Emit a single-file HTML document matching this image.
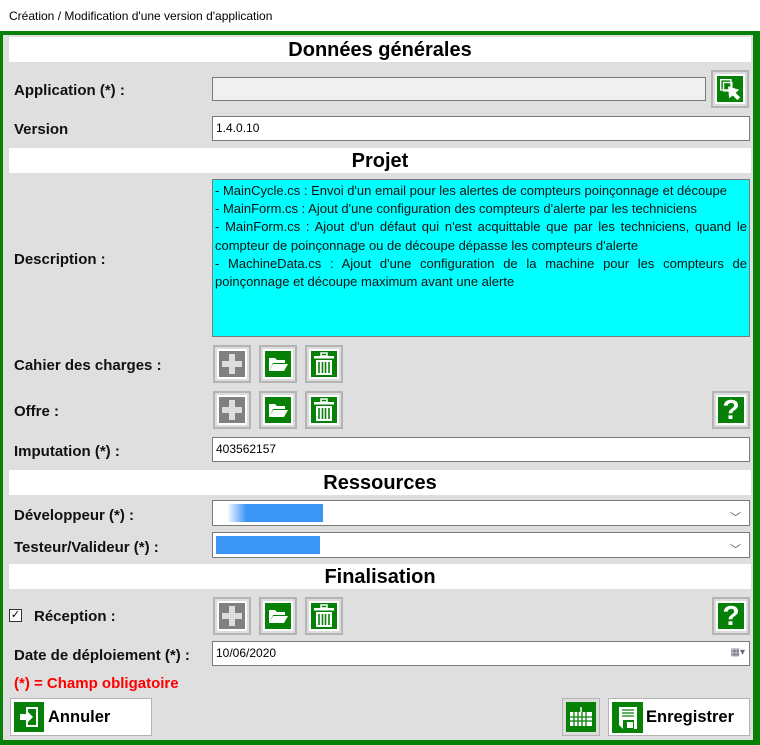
<!DOCTYPE html>
<html><head><meta charset="utf-8"><style>
*{margin:0;padding:0;box-sizing:border-box}
body{width:760px;height:745px;background:#fff;font-family:"Liberation Sans",Arial,sans-serif;position:relative;overflow:hidden}
.a{position:absolute}
.title{left:9px;top:9px;font-size:12px;color:#000}
.frame{left:0;top:31px;width:760px;height:714px;background:#078007}
.inner{left:3px;top:35px;width:750px;height:705px;background:#dfdfdf}
.hdr{left:9px;width:742px;height:25px;background:#fff;font-size:20px;font-weight:bold;text-align:center;line-height:26px}
.lbl{font-size:15px;font-weight:bold;color:#111}
.inp{background:#fff;border:1px solid #7a7a7a;font-size:12px;padding-left:3px;line-height:22px}
.btn{width:38px;height:38px;border:2px solid #b4b4b4;background:#dcdcdc;padding:2px}
.btn .in{width:100%;height:100%;background:#078007;border:2px solid #fff;display:flex;align-items:center;justify-content:center}
.btn.g .in{background:#808080}
.chev{right:8px;top:6px;font-size:11px;color:#555}
.qm{color:#fff;font-size:28px;font-weight:bold;line-height:28px}
</style></head><body>
<div class="a title">Création / Modification d'une version d'application</div>
<div class="a frame"></div>
<div class="a inner"></div>

<div class="a hdr" style="top:37px">Données générales</div>
<div class="a lbl" style="left:14px;top:82px">Application (*) :</div>
<div class="a inp" style="left:212px;top:77px;width:494px;height:24px;background:#f0f0f0"></div>
<div class="a btn" style="left:711px;top:70px"><div class="in"><svg width="28" height="28" viewBox="0 0 28 28"><rect x="4" y="4" width="11" height="11" fill="none" stroke="#fff" stroke-width="1.5"/><rect x="7" y="7" width="9" height="9" fill="none" stroke="#fff" stroke-width="1.5"/><path d="M12 11 L24 15 L20 18 L25 23 L22 26 L17 21 L13 24 Z" fill="#fff"/></svg></div></div>
<div class="a lbl" style="left:14px;top:121px">Version</div>
<div class="a inp" style="left:212px;top:116px;width:538px;height:25px">1.4.0.10</div>

<div class="a hdr" style="top:148px">Projet</div>
<div class="a lbl" style="left:14px;top:251px">Description :</div>
<div class="a" style="left:212px;top:179px;width:538px;height:158px;background:#00ffff;border:1px solid #7a7a7a;font-size:13px;line-height:18.2px;padding:2px 2px 0 2px;text-align:justify;color:#111">- MainCycle.cs : Envoi d'un email pour les alertes de compteurs poinçonnage et découpe<br>- MainForm.cs : Ajout d'une configuration des compteurs d'alerte par les techniciens<br>- MainForm.cs : Ajout d'un défaut qui n'est acquittable que par les techniciens, quand le compteur de poinçonnage ou de découpe dépasse les compteurs d'alerte<br>- MachineData.cs : Ajout d'une configuration de la machine pour les compteurs de poinçonnage et découpe maximum avant une alerte</div>

<div class="a lbl" style="left:14px;top:357px">Cahier des charges :</div>
<div class="a lbl" style="left:14px;top:403px">Offre :</div>
<div class="a lbl" style="left:14px;top:443px">Imputation (*) :</div>
<div class="a inp" style="left:212px;top:437px;width:538px;height:25px">403562157</div>

<div class="a hdr" style="top:470px">Ressources</div>
<div class="a lbl" style="left:14px;top:507px">Développeur (*) :</div>
<div class="a inp" style="left:212px;top:500px;width:538px;height:26px"><div class="a" style="left:14px;top:3px;width:96px;height:18px;background:linear-gradient(90deg,#fff,#3b95f5 20%,#3b95f5)"></div><div class="a chev">﹀</div></div>
<div class="a lbl" style="left:14px;top:539px">Testeur/Valideur (*) :</div>
<div class="a inp" style="left:212px;top:532px;width:538px;height:26px"><div class="a" style="left:3px;top:3px;width:104px;height:18px;background:#3b95f5"></div><div class="a chev">﹀</div></div>

<div class="a hdr" style="top:564px">Finalisation</div>
<div class="a" style="left:9px;top:609px;width:13px;height:13px;border:1px solid #333;background:#fff;font-size:11px;line-height:11px;text-align:center">✓</div>
<div class="a lbl" style="left:34px;top:608px">Réception :</div>
<div class="a lbl" style="left:14px;top:647px">Date de déploiement (*) :</div>
<div class="a inp" style="left:212px;top:641px;width:538px;height:25px">10/06/2020<span class="a" style="right:4px;top:0;color:#667;font-size:10px">▦▾</span></div>
<div class="a" style="left:14px;top:675px;font-size:15px;font-weight:bold;color:#f00">(*) = Champ obligatoire</div>

<div id="rows"></div>
<script>
const plus='<svg width="24" height="24"><path d="M9 2h6v7h7v6h-7v7h-6v-7h-7v-6h7z" fill="#ddd"/></svg>';
const fold='<svg width="22" height="18"><path d="M2 3h6l2 2h8v3H6L2 16z" fill="#fff"/><path d="M6 9h15l-4 7H2z" fill="#fff"/></svg>';
const trash='<svg width="22" height="24"><rect x="8" y="1" width="6" height="3" fill="none" stroke="#fff" stroke-width="1.5"/><rect x="1" y="4" width="20" height="2.5" fill="#fff"/><path d="M3 8h16v15H3z" fill="#fff"/><path d="M6 10v11M9.5 10v11M12.5 10v11M16 10v11" stroke="#078007" stroke-width="1.6"/></svg>';
const q='<span class="qm">?</span>';
let h='';
[345,391,597].forEach(t=>{
 h+=`<div class="a btn g" style="left:213px;top:${t}px"><div class="in">${plus}</div></div>`;
 h+=`<div class="a btn" style="left:259px;top:${t}px"><div class="in">${fold}</div></div>`;
 h+=`<div class="a btn" style="left:305px;top:${t}px"><div class="in">${trash}</div></div>`;
});
[391,597].forEach(t=>{h+=`<div class="a btn" style="left:712px;top:${t}px"><div class="in">${q}</div></div>`;});
document.getElementById('rows').outerHTML=h;
</script>

<div class="a" style="left:10px;top:698px;width:142px;height:38px;border:1px solid #b4b4b4;background:#fff;padding:2px">
 <div class="a" style="left:3px;top:3px;width:30px;height:30px;background:#078007;display:flex;align-items:center;justify-content:center"><svg width="22" height="24"><path d="M8 2h12v20H8v-5h2v3h8V4h-8v3H8z" fill="#fff"/><path d="M2 9h6V5l7 7-7 7v-4H2z" fill="#fff"/></svg></div>
 <div class="a" style="left:37px;top:9px;font-size:16.5px;font-weight:bold">Annuler</div>
</div>
<div class="a" style="left:562px;top:698px;width:38px;height:38px;border:1px solid #b4b4b4;background:#dcdcdc;padding:3px"><div style="width:100%;height:100%;background:#078007;display:flex;align-items:center;justify-content:center"><svg width="24" height="20"><path d="M12 0v5" stroke="#fff" stroke-width="1.5"/><rect x="1" y="5" width="22" height="14" fill="#fff"/><path d="M5 5v14M9 5v14M13 5v14M17 5v14M1 10h22M1 14h22" stroke="#078007" stroke-width="1.3"/></svg></div></div>
<div class="a" style="left:608px;top:698px;width:142px;height:38px;border:1px solid #b4b4b4;background:#fff">
 <div class="a" style="left:3px;top:3px;width:31px;height:31px;background:#078007;display:flex;align-items:center;justify-content:center"><svg width="22" height="24"><path d="M2 1h18v22H6l-4-4z" fill="#fff"/><path d="M5 4h12M5 7h12M5 10h12" stroke="#078007" stroke-width="1.3"/><rect x="6" y="14" width="11" height="9" fill="#078007"/><rect x="10" y="16" width="6" height="6" fill="#fff"/></svg></div>
 <div class="a" style="left:37px;top:9px;font-size:16.5px;font-weight:bold">Enregistrer</div>
</div>
</body></html>
